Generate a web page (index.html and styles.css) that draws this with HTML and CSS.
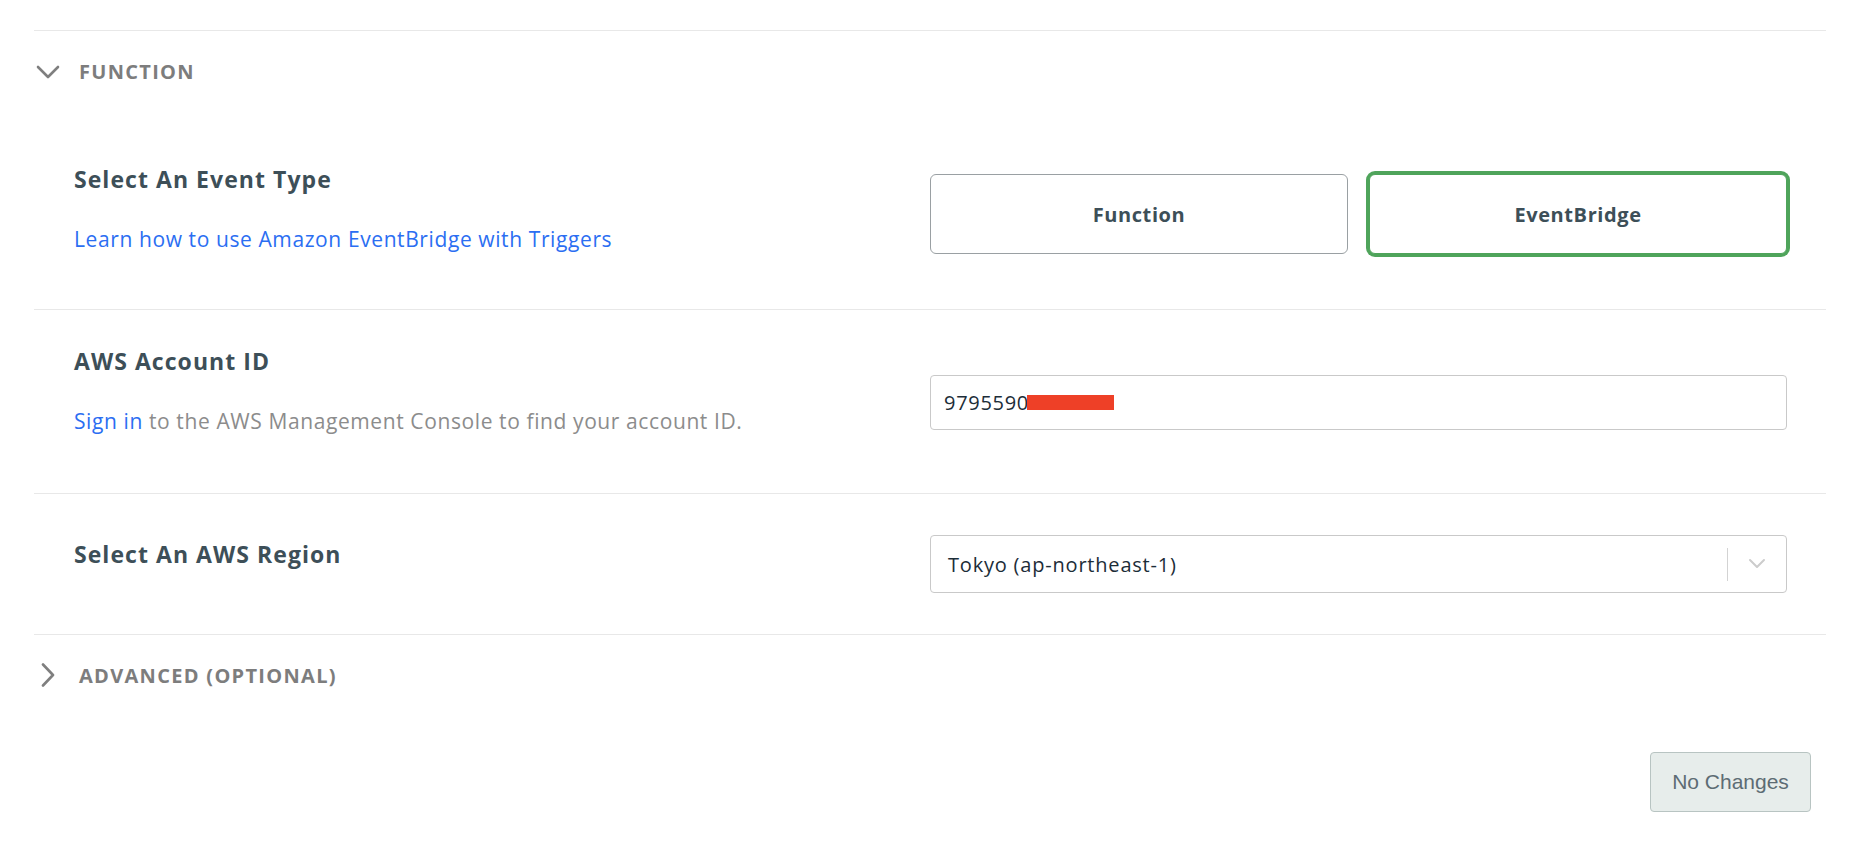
FILE: index.html
```html
<!DOCTYPE html>
<html lang="en">
<head>
<meta charset="utf-8">
<title>Trigger</title>
<link rel="stylesheet" href="styles.css">
</head>
<body>
<div class="panel">
  <div class="toggle toggle-top">
    <span class="toggle-icon">
      <svg width="24" height="14" viewBox="0 0 24 14"><path d="M2 2 L12 12 L22 2" fill="none" stroke="#7f7f7f" stroke-width="2.6" stroke-linecap="round" stroke-linejoin="round"/></svg>
    </span>
    <span class="toggle-label">FUNCTION</span>
  </div>

  <div class="row row-event">
    <div class="row-info">
      <div class="row-title">Select An Event Type</div>
      <a class="row-link" href="#">Learn how to use Amazon EventBridge with Triggers</a>
    </div>
    <div class="row-control choice-group">
      <button class="choice">Function</button>
      <button class="choice choice-selected">EventBridge</button>
    </div>
  </div>

  <div class="row row-bordered row-account">
    <div class="row-info">
      <div class="row-title">AWS Account ID</div>
      <div class="row-text"><a class="row-link" href="#">Sign in</a> to the AWS Management Console to find your account ID.</div>
    </div>
    <div class="row-control">
      <div class="text-input"><span>9795590</span><span class="redact"></span></div>
    </div>
  </div>

  <div class="row row-bordered row-region">
    <div class="row-info">
      <div class="row-title">Select An AWS Region</div>
    </div>
    <div class="row-control">
      <div class="select">
        <span class="select-value">Tokyo (ap-northeast-1)</span>
        <span class="select-sep"></span>
        <span class="select-arrow">
          <svg width="20" height="12" viewBox="0 0 20 12"><path d="M3 2 L10 9 L17 2" fill="none" stroke="#cccccc" stroke-width="2" stroke-linecap="round" stroke-linejoin="round"/></svg>
        </span>
      </div>
    </div>
  </div>

  <div class="toggle toggle-advanced">
    <span class="toggle-icon">
      <svg width="24" height="24" viewBox="0 0 24 24"><path d="M7 1.5 L17 12 L7 22.5" fill="none" stroke="#7f7f7f" stroke-width="2.6" stroke-linecap="round" stroke-linejoin="round"/></svg>
    </span>
    <span class="toggle-label">ADVANCED (OPTIONAL)</span>
  </div>

  <div class="footer">
    <button class="btn-nochange">No Changes</button>
  </div>
</div>
</body>
</html>
```

FILE: styles.css
```css
html, body {
  margin: 0;
  padding: 0;
  background: #ffffff;
}

body {
  font-family: "Open Sans", "Noto Sans", sans-serif;
  color: #3d4f58;
}

.panel {
  margin: 0 38px 0 34px;
  padding-top: 30px;
}

/* collapsible section headers */
.toggle {
  display: flex;
  align-items: center;
  gap: 19px;
  padding-left: 2px;
  height: 81px;
  border-top: 1px solid #e8e8e8;
}

.toggle-advanced {
  height: 80px;
}

.toggle-icon {
  width: 24px;
  display: flex;
  justify-content: center;
  align-items: center;
}

.toggle-label {
  font-size: 20px;
  font-weight: 700;
  letter-spacing: 1.3px;
  color: #7d7d7d;
}

/* form rows */
.row {
  display: flex;
  align-items: flex-start;
  padding: 0 39px 0 40px;
}

.row-bordered {
  border-top: 1px solid #e8e8e8;
}

.row-info {
  flex: 1;
}

.row-event .row-info { padding-top: 53px; }
.row-event .row-control { padding: 62px 0 55px; }

.row-account .row-info { padding-top: 37px; }
.row-account .row-control { padding: 65px 0 63px; }

.row-region .row-info { padding-top: 46px; }
.row-region .row-control { padding: 41px 0 41px; }

.row-title {
  font-size: 23px;
  line-height: 28px;
  font-weight: 700;
  letter-spacing: 1.05px;
  color: #3d4f58;
}

.row-link {
  display: inline-block;
  margin-top: 32px;
  font-size: 21px;
  line-height: 28px;
  letter-spacing: 0.6px;
  color: #2b6ef2;
  text-decoration: none;
}

.row-text {
  margin-top: 32px;
  font-size: 21px;
  line-height: 28px;
  letter-spacing: 0.6px;
  color: #8c8c8c;
}

.row-text .row-link {
  margin-top: 0;
}

.row-control {
  width: 857px;
}

.choice-group {
  display: flex;
  gap: 21px;
}

.choice {
  flex: 1;
  height: 80px;
  background: #ffffff;
  border: 1px solid #9aa0a3;
  border-radius: 6px;
  font-family: "Open Sans", "Noto Sans", sans-serif;
  font-size: 20px;
  font-weight: 700;
  letter-spacing: 0.6px;
  color: #3d4f58;
}

.choice-selected {
  border-color: #4fa45b;
  box-shadow: 0 0 0 3px #4fa45b;
}

.text-input {
  height: 53px;
  border: 1px solid #c9c9c9;
  border-radius: 4px;
  display: flex;
  align-items: center;
  padding-left: 13px;
  font-size: 20px;
  letter-spacing: 0.7px;
  color: #1c2d38;
}

.redact {
  display: inline-block;
  width: 87px;
  height: 15px;
  margin-left: -2px;
  background: #ee4027;
}

.select {
  height: 56px;
  border: 1px solid #c9c9c9;
  border-radius: 4px;
  display: flex;
  align-items: center;
  padding-left: 17px;
  font-size: 20px;
  letter-spacing: 0.8px;
  color: #1c2d38;
}

.select-value {
  flex: 1;
}

.select-sep {
  width: 1px;
  height: 33px;
  background: #d3d3d3;
}

.select-arrow {
  width: 58px;
  display: flex;
  justify-content: center;
  align-items: center;
}

.footer {
  display: flex;
  justify-content: flex-end;
  padding: 37px 15px 40px 0;
}

.btn-nochange {
  width: 161px;
  height: 60px;
  background: #e7edeb;
  border: 1px solid #b8c4c2;
  border-radius: 4px;
  font-family: "Liberation Sans", Arial, sans-serif;
  font-size: 21px;
  color: #5d6c74;
}
```
